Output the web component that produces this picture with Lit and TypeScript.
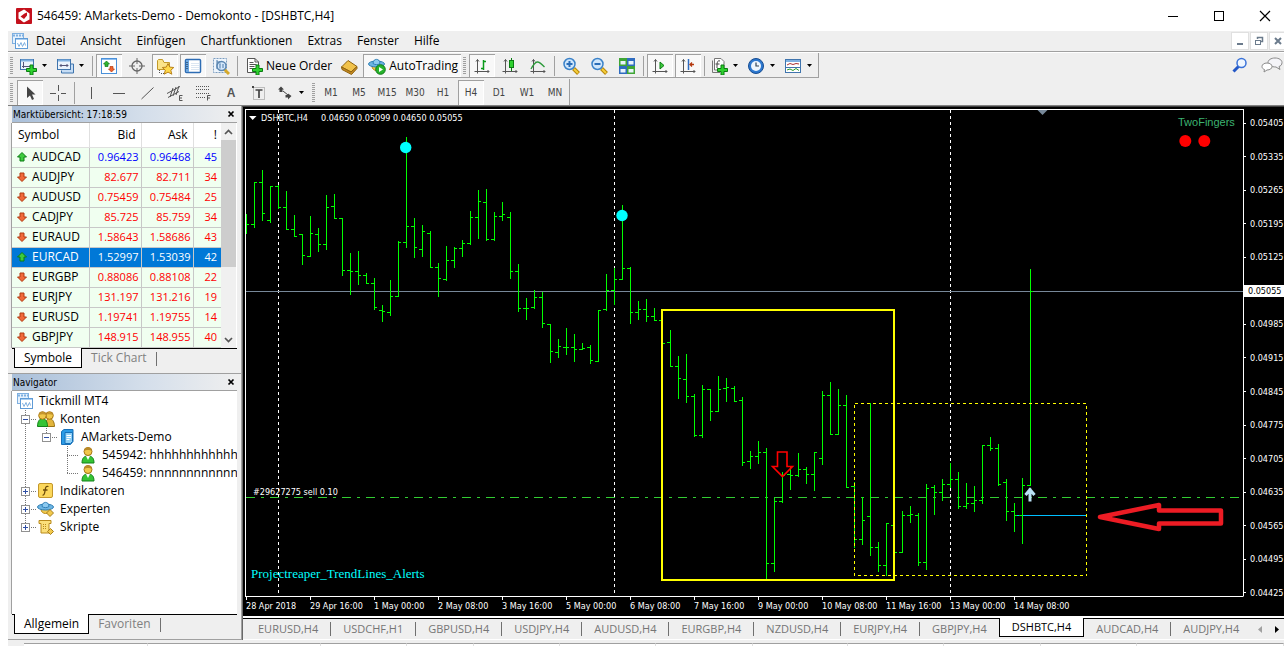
import { LitElement, html, svg, css, nothing } from "lit";
import { customElement, property, state } from "lit/decorators.js";
import { classMap } from "lit/directives/class-map.js";

/* ---------- icons, drawn on an 18 x 18 grid ---------- */
const axes = svg`<path d="M4.500 2.500V16.500M1.500 14.500H16M3 4.500L4.500 2.500L6 4.500M14.500 13L16 14.500L14.500 16" fill="none" stroke="#555"/>`;
const plus = svg`<path d="M11 8h3v3.500h3.500v3H14V18h-3v-3.500H7.500v-3H11z" fill="#2fd12f" stroke="#0a7d12"/>`;
const lens = (sign: unknown) => svg`<path d="M11.500 11.500L16.500 16.500" stroke="#b8860b" stroke-width="4"/><path d="M12 12L16 16" stroke="#f5cf3c" stroke-width="2"/><circle cx="7.500" cy="7" r="5.500" fill="#cfe6fb" stroke="#3b82c9" stroke-width="1.500"/>${sign}`;
const person = svg`<path d="M3 17c0-5 2-7 6-7s6 2 6 7z" fill="#35c435" stroke="#13821a"/><path d="M7 10l2 4 2-4z" fill="#fff"/><circle cx="9" cy="5.500" r="4" fill="#f0c84a" stroke="#a87512"/><path d="M5 5c0-5 8-5 8 0-2-1.500-6-1.500-8 0z" fill="#b98a2a"/>`;
const hat = svg`<path d="M4 9c0 6 9 6 9 0z" fill="#f2c94c" stroke="#b98a1b"/><ellipse cx="8.500" cy="7" rx="8" ry="3" fill="#6db5e3" stroke="#2f7fb5"/><path d="M5 6.500C5 1 12 1 12 6.500c-2 1.500-5 1.500-7 0z" fill="#8ccaf0" stroke="#2f7fb5"/>`;
const windows = svg`<rect x="1.500" y="1.500" width="11" height="10" fill="#e6f1fc" stroke="#7fb0e0"/><path d="M2 3.500H12" stroke="#7fb0e0" stroke-width="2" stroke-dasharray="2 1"/><rect x="4.500" y="6.500" width="12" height="10" fill="#fff" stroke="#5f9bd6"/><path d="M5 7.500H16" stroke="#a9cdf0"/><path d="M6.500 11l1.500 3.500 2-4 1.500 4 2-4 1 3" fill="none" stroke="#7fb0e0"/>`;

const ICONS: Record<string, unknown> = {
  logo: svg`<rect x="1" y="1" width="16" height="16" rx="1" fill="#c4111c"/><path d="M9 2.500L14.500 5.500v7L9 15.500 3.500 12.500v-7z" fill="#fff"/><path d="M9.500 6.500L12 5.500v3L9 12 5.500 9.500z" fill="#c4111c"/><path d="M11 3l4 3M3 12l4 3" stroke="#c4111c" stroke-width="1.500"/>`,
  windows,
  newchart: svg`<rect x="1.500" y="2.500" width="13" height="10" fill="#eaf3fd" stroke="#3f74ad"/><path d="M2 3.500H14" stroke="#7fb0e0" stroke-width="2"/><path d="M4.500 5v6M3 9.500h9" stroke="#557" fill="none"/>${plus}`,
  profiles: svg`<path d="M5.500 13.500v2.500h12V7H15" fill="#c6ddf5" stroke="#3f74ad"/><rect x="1.500" y="2.500" width="13" height="10" fill="#eaf3fd" stroke="#3f74ad"/><path d="M2 3.500H14" stroke="#7fb0e0" stroke-width="2"/><path d="M4 8.500h8M5.500 7L4 8.500 5.500 10M10.500 7L12 8.500 10.500 10" stroke="#557" fill="none"/>`,
  market: svg`<rect x="1.500" y="1.500" width="15" height="15" fill="#fff" stroke="#4a90d9"/><path d="M2 2.500H16" stroke="#8dbdf0"/><path d="M6.500 4L9.500 7H8v2.500H5V7H3.500z" fill="#2fb32f" stroke="#0e7a15" stroke-width=".7"/><path d="M11.500 15L8.500 12H10V9.500h3V12h1.500z" fill="#f06432" stroke="#b33a10" stroke-width=".7"/>`,
  datawin: svg`<circle cx="9" cy="9" r="5" fill="none" stroke="#666" stroke-width="1.300"/><path d="M9 1V7M9 11V17M1 9H7M11 9H17" stroke="#666"/>`,
  favorites: svg`<path d="M1.500 3.500V12.500H13.500V5.500H8L6.500 2.500H2.500z" fill="#fbe48a" stroke="#c29a2a"/><path d="M3.500 13v4M5 16.500h3" stroke="#555" stroke-dasharray="1 1"/><path d="M12 6.500l1.800 3.600 4 .4-3 2.700 1 4L12 15.100 8.300 17.200l1-4-3-2.700 4-.4z" fill="#ffd94a" stroke="#b9821a"/>`,
  terminal: svg`<rect x="1.500" y="2.500" width="15" height="13" rx="1" fill="#fff" stroke="#2e6db4" stroke-width="1.500"/><rect x="2" y="3" width="3" height="12" fill="#6da7e0"/><path d="M7 6.500h8M7 8.500h8M7 10.500h8M7 12.500h8" stroke="#dbe6f2"/><path d="M3 5v8" stroke="#123" stroke-dasharray="1 1"/>`,
  tester: svg`<rect x="1.500" y="1.500" width="13" height="14" fill="#eef5fc" stroke="#7b9dc0" stroke-dasharray="2 1"/><path d="M5 3v9M5 5h3M8 4v4" stroke="#4a78a8"/><path d="M12 12L17 17" stroke="#d6a92a" stroke-width="3"/><circle cx="9.500" cy="9" r="4.500" fill="#cfe6fb" fill-opacity=".8" stroke="#5c87b2" stroke-width="1.500"/><path d="M8 6.500v5M11 7v4" stroke="#4a78a8"/>`,
  order: svg`<path d="M2.500 1.500H10l3.500 3.500V15.500H2.500z" fill="#fff" stroke="#555"/><path d="M10 1.500V5H13.500M4.500 5.500h4M4.500 7.500h7M4.500 9.500h5M4.500 11.500h3" stroke="#555" fill="none"/>${plus}`,
  editor: svg`<path d="M1.500 10L8 3.500l9 6L11 15z" fill="#f1c24a" stroke="#8f6310"/><path d="M1.500 10l.5 2.500L11.500 17.500 17 11.500V9.500L11 15z" fill="#c58a22" stroke="#8f6310"/>`,
  auto: svg`${hat}<circle cx="12.500" cy="12.500" r="4.800" fill="#27b32c" stroke="#0f7a18"/><path d="M11 10v5l4-2.500z" fill="#fff"/>`,
  bars: svg`${axes}<path d="M10.500 3v10M10 4.500h3M8 11.500h3" stroke="#0a9a1a" stroke-width="1.500"/>`,
  candles: svg`${axes}<path d="M10.500 1v13" stroke="#0a7d12"/><rect x="8.500" y="3.500" width="4" height="7" fill="#2fd12f" stroke="#0a7d12"/>`,
  line: svg`${axes}<path d="M2 12C7 3 9 3 15.500 10" fill="none" stroke="#2c9a3a" stroke-width="1.300"/>`,
  zoomin: lens(svg`<path d="M4.500 7h6M7.500 4v6" stroke="#2a6db8" stroke-width="2"/>`),
  zoomout: lens(svg`<path d="M4.500 7h6" stroke="#2a6db8" stroke-width="2"/>`),
  tile: svg`<rect x="1" y="1" width="8" height="8" fill="#3fa535"/><rect x="9" y="1" width="8" height="8" fill="#2f6cc0"/><rect x="1" y="9" width="8" height="8" fill="#2f6cc0"/><rect x="9" y="9" width="8" height="8" fill="#3fa535"/><path d="M2.500 4h5v3.500h-5zM10.500 4h5v3.500h-5zM2.500 12h5v3.500h-5zM10.500 12h5v3.500h-5z" fill="#e9f3fb"/>`,
  scroll: svg`${axes}<path d="M9 5v7l4-3.500z" fill="#3ecb3e" stroke="#0a7d12"/>`,
  shift: svg`${axes}<path d="M9.500 2v11" stroke="#2f6cc0" stroke-width="1.500"/><path d="M15 7.500H11M13 5.500L11 7.500 13 9.500" stroke="#b5390f" stroke-width="1.300" fill="none"/>`,
  indicators: svg`<path d="M4.500 1.500H11L14 4.500V13H4.500z" fill="#fff" stroke="#777"/><path d="M2.500 3.500V15.500H10" stroke="#777" fill="none"/><path d="M10 4c-3-1-3 2-3 7M5.500 7h4" stroke="#444" fill="none"/>${plus}`,
  periods: svg`<circle cx="9" cy="9" r="7.500" fill="#2d78cf" stroke="#174d92"/><circle cx="9" cy="9" r="5" fill="#eef6fe"/><path d="M9 5.500V9H12" fill="none" stroke="#345" stroke-width="1.200"/>`,
  templates: svg`<rect x="1.500" y="2.500" width="15" height="13" fill="#fff" stroke="#3f74ad"/><path d="M2 4H16" stroke="#7fb0e0" stroke-width="2"/><path d="M2 10.500H16" stroke="#3f74ad"/><path d="M3 8l3-1.500 3 1 3-1 3 .5" fill="none" stroke="#a33"/><path d="M3 13l3-1 3 1.500 3-2 3 2" fill="none" stroke="#2a9a2a"/>`,
  cursor: svg`<path d="M6 2.500V14l3-2.500 2 4.500 2-1-2-4.500H14.500z" fill="#444"/>`,
  cross: svg`<path d="M9.500 1V7M9.500 11V17M1 9.500H7M12 9.500H17" stroke="#555"/>`,
  vline: svg`<path d="M9.500 3V15" stroke="#555"/>`,
  hline: svg`<path d="M3 9.500H15" stroke="#555"/>`,
  trend: svg`<path d="M3.500 15L15.500 3.500" stroke="#555"/>`,
  channel: svg`<path d="M1 9.500L14 2.500M2 13.500L13 7.500M4 13L7 4M7 12l3-9M10 11l3-9" stroke="#555" fill="none"/><path d="M16.500 11.500h-3v5h3M13.500 14h2.500" fill="none" stroke="#555"/>`,
  fibo: svg`<path d="M2 2.500H16M2 5.500H16M2 9.500H16M2 13.500H11" stroke="#555" stroke-dasharray="1 1"/><path d="M16.500 11.500h-3v5M13.500 14h2.500" fill="none" stroke="#555"/>`,
  label: svg`<rect x="3.500" y="3.500" width="11" height="12" fill="none" stroke="#888" stroke-dasharray="1 1"/><path d="M5.500 6h7M9 6v8" stroke="#444" stroke-width="1.700"/><rect x="2" y="2" width="2" height="2" fill="#444"/>`,
  arrows: svg`<path d="M5 2.500l3 3H6.500V8h-3V5.500H2z" fill="#444"/><path d="M7 7l5 4" stroke="#444"/><path d="M12 15.500l3.500-3.500L12 9.500v1.500H9.500v2.500H12z" fill="#444"/>`,
  search: svg`<path d="M2.500 15.500L8 10" stroke="#2357c6" stroke-width="3"/><circle cx="10.500" cy="7" r="4.500" fill="#eef6ff" stroke="#3a72d8" stroke-width="1.500"/>`,
  tree: windows,
  accounts: svg`<path d="M8 16.500c0-5 2-8 4.500-8s5 3 5 8z" fill="#e2b53c" stroke="#9a7416"/><circle cx="12.500" cy="5.500" r="3.800" fill="#f0c84a" stroke="#a87512"/><path d="M.500 16.500c0-5 2-8 5-8s5 3 5 8z" fill="#35c435" stroke="#13821a"/><circle cx="5.500" cy="5.500" r="3.800" fill="#f0c84a" stroke="#a87512"/><path d="M2 5c0-4.500 7-4.500 7 0-2-1-5-1-7 0zM9.500 4.500c1-3 6-3 6.500.5-2-1-4-1-6.500-.5z" fill="#c4952e"/>`,
  server: svg`<path d="M3.500 3.500L6 1.500h9v12l-2.500 3h-9z" fill="#2b9be6" stroke="#1670b8"/><path d="M7 4.500h7.500v9l-2 2H7z" fill="#8fd0f7" stroke="#1670b8"/><path d="M8.500 7.500h4.500M8.500 9.500h4.500M8.500 11.500h3" stroke="#fff"/>`,
  person,
  indicator: svg`<rect x="1.500" y="1.500" width="14" height="14" rx="1.500" fill="#fbd75b" stroke="#c4972a"/><path d="M11.500 4.500C8.500 3.500 8.500 6 8 9s-1 4.500-2.500 4M6 8h4.500" fill="none" stroke="#6d4c0b" stroke-width="1.300"/>`,
  expert: svg`${hat}<path d="M13 9.500l3.500 3.500-3.500 3.500L9.500 13z" fill="#f2c94c" stroke="#a8801f"/>`,
  script: svg`<path d="M2 2.500h12v3h-2V12h2.500v3H4V5.500H2z" fill="#fbdf7a" stroke="#b98a1b"/><path d="M6 6.500h4M6 8.500h4M6 10.500h4" stroke="#b98a1b" stroke-dasharray="1 1"/><path d="M13.500 10.500l3 3-3 3-3-3z" fill="#f2c94c" stroke="#a8801f"/>`,
  up: svg`<path d="M9 4.500l4.500 4.500H11v4H7V9H4.500z" fill="#3ecb3e" stroke="#0a7d12"/>`,
  down: svg`<path d="M9 13.500l4.500-4.500H11V5H7v4H4.500z" fill="#f06a3a" stroke="#b23a10"/>`,
};
const icon = (name: string) => html`<svg width="18" height="18" viewBox="0 0 18 18" aria-hidden="true">${ICONS[name]}</svg>`;
const caret = html`<svg width="7" height="4" viewBox="0 0 7 4" aria-hidden="true"><path d="M1 0H6L3.500 3z" fill="#000"/></svg>`;
const cross = html`<svg width="8" height="8" viewBox="0 0 8 8" aria-hidden="true"><path d="M1.500 1.500L6.500 6.500M6.500 1.500L1.500 6.500" stroke="#000" stroke-width="1.700"/></svg>`;

/* ---------- chart data: high, low, open, close on the vertical scale ---------- */
const BARS: number[][] = [
  [214,234,224,224],[182,228,224,182],[170,221,182,213],[186,223,220,186],[185,209,186,207],[191,230,207,229],
  [215,237,229,236],[234,265,234,255],[216,257,256,233],[228,252,234,244],[195,250,244,207],[194,219,206,218],
  [218,276,218,270],[253,295,270,271],[251,285,271,275],[273,284,275,283],[278,310,283,307],[305,322,310,311],
  [280,316,312,296],[241,297,296,242],[137,248,242,226],[218,258,226,247],[225,257,249,231],[231,268,233,267],
  [263,297,267,278],[246,281,279,260],[247,268,260,248],[240,257,248,243],[211,245,243,217],[190,239,217,201],
  [189,241,202,239],[212,241,239,216],[202,221,216,214],[212,279,217,271],[264,312,271,308],[298,320,308,308],
  [290,309,307,297],[292,328,297,323],[324,363,324,351],[339,358,352,346],[328,355,347,347],[334,362,347,349],
  [343,350,349,348],[345,364,347,360],[310,362,361,310],[274,311,309,290],[268,305,290,279],[205,280,279,268],
  [267,324,268,312],[301,320,312,309],[299,322,309,316],[308,321,316,320],[320,344,320,343],[330,367,342,366],
  [356,399,366,378],[354,403,379,396],[394,437,396,435],[385,438,435,389],[389,421,389,411],[376,412,411,389],
  [378,402,388,387],[386,402,388,401],[397,466,400,462],[451,469,461,456],[441,464,456,452],[448,579,452,563],
  [498,572,563,501],[472,503,501,475],[466,490,474,475],[453,477,475,469],[467,484,469,474],[452,491,474,452],
  [391,465,458,395],[382,435,395,434],[389,435,434,405],[395,488,405,487],[482,548,486,539],[497,545,539,520],
  [403,556,516,547],[542,572,547,565],[523,576,565,523],[525,553,525,552],[511,553,552,515],[506,523,515,514],
  [513,566,515,562],[484,570,562,488],[485,515,487,492],[479,501,492,484],[463,488,484,479],[472,509,479,506],
  [483,509,506,503],[486,512,503,500],[445,504,500,445],[437,451,445,448],[444,486,448,484],[479,521,482,511],
  [503,532,511,515],[478,544,515,485],[269,486,485,291],
];
const barPath = BARS.map(([h, l, o, c], i) => {
  const x = 246 + i * 8;
  return `M${x + 0.5} ${h}V${l}M${x - 3} ${o + 0.5}H${x + 1}M${x} ${c + 0.5}H${x + 3}`;
}).join("");

const PRICES = ["0.05405","0.05335","0.05265","0.05195","0.05125","0.05055","0.04985","0.04915","0.04845","0.04775","0.04705","0.04635","0.04565","0.04495","0.04425"];
const TIMES = ["28 Apr 2018","29 Apr 16:00","1 May 00:00","2 May 08:00","3 May 16:00","5 May 00:00","6 May 08:00","7 May 16:00","9 May 00:00","10 May 08:00","11 May 16:00","13 May 00:00","14 May 08:00"];

@customElement("mt-chart")
export class MtChart extends LitElement {
  static styles = css`
    :host { flex: 1; min-height: 0; display: grid; grid-template-columns: minmax(0, 1fr) 41px; grid-template-rows: minmax(0, 1fr) 19px; background: #000; color: #fff; padding: 2px 0 0 2px; font: 9px/12px "DejaVu Sans Condensed", "DejaVu Sans", sans-serif; overflow: hidden; }
    .plot { display: block; width: 100%; height: 100%; box-sizing: border-box; border: 1px solid #fff; border-right: 0; }
    .prices { margin: 0; padding: 8px 0 0; list-style: none; border-left: 1px solid #fff; border-bottom: 1px solid #000; display: flex; flex-direction: column; justify-content: space-between; }
    .prices li { display: flex; align-items: center; gap: 4px; height: 12px; white-space: nowrap; }
    .prices li:last-child { margin-bottom: -3px; }
    .prices li::before { content: ""; width: 2px; height: 1px; background: #fff; }
    .prices .now { gap: 0; }
    .now span { background: #fff; color: #000; padding: 0 4px; }
    .times { margin: 0; padding: 0 0 0 1px; list-style: none; display: flex; overflow: hidden; }
    .times li { flex: 0 0 64px; white-space: nowrap; line-height: 12px; }
    .times li::before { content: ""; display: block; width: 1px; height: 3px; background: #fff; }
    .small { font-size: 9px; fill: #fff; }
    .brand { font: 11px "Liberation Sans", sans-serif; fill: #3cb371; }
    .alerts { font: 13px "Liberation Serif", serif; fill: #00ffff; }
  `;
  render() {
    return html`
      <svg class="plot" role="img" aria-label="DSHBTC,H4">
        <g transform="translate(-246 -110)">
          <g fill="none" shape-rendering="crispEdges">
            <path d="M278.500 110V596M614.500 110V596M950.500 110V596" stroke="#fff" stroke-dasharray="3 3"/>
            <path d="M246 291.500H1243" stroke="#778899"/>
            <path d="M246 497.500H1243" stroke="#32cd32" stroke-dasharray="9 6 3 6"/>
            <path d="M1014 515.500H1087" stroke="#00bfff"/>
            <path d=${barPath} stroke="#00ff00"/>
            <rect x="854.500" y="403.500" width="232" height="172" stroke="#ffff00" stroke-dasharray="3 3"/>
            <rect x="662" y="310" width="232" height="270" stroke="#ffff00" stroke-width="2"/>
          </g>
          <circle cx="405.700" cy="147.500" r="5.700" fill="#00ffff"/>
          <circle cx="622" cy="215.500" r="5.700" fill="#00ffff"/>
          <circle cx="1185.300" cy="141" r="6" fill="#f00"/>
          <circle cx="1204.300" cy="141" r="6" fill="#f00"/>
          <path d="M777.500 452H787V466.500H792.500L782.500 476.500 772.500 466.500H777.500z" fill="none" stroke="#f00" stroke-width="1.600"/>
          <path d="M1030 488.500V501.500M1025.500 495L1030 489.500 1034.500 495" fill="none" stroke="#b9e0f5" stroke-width="3"/>
          <path d="M1100 517L1159 505V510.500H1221V523.500H1159V529z" fill="none" stroke="#ed1c24" stroke-width="4.500" stroke-linejoin="round"/>
          <path d="M1037.500 110H1047.500L1042.500 115z" fill="#778899"/>
          <path d="M249 116H256.500L252.700 120z" fill="#fff"/>
          <text class="small" x="261" y="121">DSHBTC,H4</text>
          <text class="small" x="321" y="121">0.04650 0.05099 0.04650 0.05055</text>
          <text class="small" x="253" y="495">#29627275 sell 0.10</text>
          <text class="brand" x="1178" y="126">TwoFingers</text>
          <text class="alerts" x="251" y="578">Projectreaper_TrendLines_Alerts</text>
        </g>
      </svg>
      <ol class="prices">${PRICES.map((p) => html`<li class=${classMap({ now: p === "0.05055" })}><span>${p}</span></li>`)}</ol>
      <ol class="times">${TIMES.map((t) => html`<li>${t}</li>`)}</ol>
    `;
  }
}

const QUOTES: [string, string, string, string, boolean][] = [
  ["AUDCAD","0.96423","0.96468","45",true],["AUDJPY","82.677","82.711","34",false],["AUDUSD","0.75459","0.75484","25",false],
  ["CADJPY","85.725","85.759","34",false],["EURAUD","1.58643","1.58686","43",false],["EURCAD","1.52997","1.53039","42",true],
  ["EURGBP","0.88086","0.88108","22",false],["EURJPY","131.197","131.216","19",false],["EURUSD","1.19741","1.19755","14",false],
  ["GBPJPY","148.915","148.955","40",false],
];
/* guides per row: v line through, t branch, l last branch, + and - boxes, p last + box, x empty */
const NODES: [string, string, string][] = [
  ["","tree","Tickmill MT4"],["o","accounts","Konten"],["v-","server","AMarkets-Demo"],
  ["vxt","person","545942: hhhhhhhhhhhh"],["vxl","person","546459: nnnnnnnnnnnnnnnn"],
  ["+","indicator","Indikatoren"],["+","expert","Experten"],["p","script","Skripte"],
];
const guide = (g: string) => {
  const open = g === "-" || g === "o";
  const box = open || g === "+" || g === "p";
  const line = g === "x" ? "" : g === "l" || g === "p" || g === "-" ? "M9.500 0V9" : "M9.500 0V18";
  return html`<svg width="21" height="18" viewBox="0 0 21 18" aria-hidden="true">
    <path d="${line}${g === "x" || g === "v" ? "" : "M9 9.500H20"}" fill="none" stroke="#777" stroke-dasharray="1 1"/>
    ${box ? svg`<rect x="5.500" y="5.500" width="8" height="8" fill="#fff" stroke="#919191"/><path d="M7 9.500H12${open ? "" : "M9.500 7V12"}" stroke="#2f4fa5"/>` : nothing}
  </svg>`;
};

@customElement("mt-panel")
export class MtPanel extends LitElement {
  @property() heading = "";
  @property({ attribute: false }) tabs: string[] = [];
  static styles = css`
    :host { display: flex; flex-direction: column; min-height: 0; padding: 0 4px 3px; border-bottom: 1px solid #a0a0a0; }
    .title { display: flex; align-items: center; justify-content: space-between; height: 16px; flex: none; padding: 0 2px 0 1px; background: linear-gradient(90deg, #a9bfd9, #d5dfeb 60%, #efefef); border-bottom: 1px solid #a0a0a0; }
    h2 { margin: 0; font: 10px/15px "DejaVu Sans Condensed", "DejaVu Sans", sans-serif; }
    button { font: inherit; border: 0; background: none; padding: 0; color: #808080; display: flex; align-items: center; }
    .body { flex: 1; min-height: 0; display: flex; overflow: hidden; background: #fff; border-left: 1px solid #a0a0a0; margin-left: -1px; }
    .tabs { display: flex; height: 22px; flex: none; box-shadow: inset 0 1px #000; }
    .tabs button { height: 20px; padding: 0 9px; }
    .tabs button.on { background: #fff; color: #000; margin-left: 2px; border: 1px solid #000; border-top: 0; }
    .rule { width: 1px; height: 14px; margin-top: 4px; background: #707070; }
  `;
  render() {
    return html`
      <div class="title"><h2>${this.heading}</h2><button aria-label="Schließen">${cross}</button></div>
      <div class="body"><slot></slot></div>
      <div class="tabs">${this.tabs.map((t, i) => html`<button class=${classMap({ on: i === 0 })}>${t}</button>`)}<span class="rule"></span></div>
    `;
  }
}

const CHART_TABS = ["EURUSD,H4","USDCHF,H1","GBPUSD,H4","USDJPY,H4","AUDUSD,H4","EURGBP,H4","NZDUSD,H4","EURJPY,H4","GBPJPY,H4","DSHBTC,H4","AUDCAD,H4","AUDJPY,H4"];
const STATUS = [124, 173, 86, 67, 86, 96, 97, 95, 96, 97, 96];

@customElement("app-root")
export class AppRoot extends LitElement {
  @state() private active = "DSHBTC,H4";
  static styles = css`
    :host { display: flex; flex-direction: column; height: 100vh; padding-left: 8px; box-sizing: border-box; background: #fff; color: #000; font: 12px/16px "Open Sans", "Noto Sans", sans-serif; overflow: hidden; }
    button { font: inherit; color: inherit; border: 0; background: none; padding: 0; margin: 0; display: flex; align-items: center; justify-content: center; flex: none; }
    svg { flex: none; display: block; }
    .caption { display: flex; align-items: center; height: 31px; flex: none; padding-left: 7px; margin-right: -4px; }
    h1 { flex: 1; margin: 0; padding-left: 4px; font: inherit; white-space: nowrap; }
    .caption button { width: 46px; height: 31px; }
    .menu { display: flex; align-items: center; height: 20px; flex: none; background: #efefef; border-bottom: 1px solid #a0a0a0; padding-left: 3px; }
    .menu nav { display: flex; flex: 1; gap: 15px; padding-left: 7px; }
    .menu a { color: inherit; text-decoration: none; }
    .mdi { display: flex; gap: 1px; overflow: hidden; width: 53px; }
    .mdi button { width: 18px; height: 18px; box-sizing: border-box; background: #fff; border: 1px solid #e0e0e0; }
    .bars { background: #efefef; border-top: 1px solid #fff; display: flex; justify-content: space-between; flex: none; border-bottom: 1px solid #808080; }
    .row { display: flex; height: 25px; box-sizing: border-box; width: max-content; border-right: 1px solid #a0a0a0; border-bottom: 1px solid #a0a0a0; margin-bottom: 1px; padding-top: 1px; }
    .row.last { border-bottom: 0; height: 26px; margin: 0; }
    .grip { width: 3px; margin: 3px 2px; background: repeating-linear-gradient(#a0a0a0 0 1px, transparent 1px 2px); }
    .grip.first { margin-right: 3px; }
    .tool { width: 28px; }
    .on { box-shadow: inset 1px 1px #a0a0a0, inset -1px -1px #fff; background: #f8f8f8; }
    .tool.on { width: 26px; margin: 0 1px; }
    .drop { width: 37px; gap: 4px; justify-content: flex-start; padding-left: 3px; box-sizing: border-box; }
    .sep { width: 1px; background: #a0a0a0; margin: 2px 2px 1px; }
    .wide { gap: 3px; padding: 0 3px 0 5px; }
    .frame { font: 10px/14px "DejaVu Sans Condensed", "DejaVu Sans", sans-serif; color: #444; }
    .letter { font: bold 12px "Liberation Sans", sans-serif; color: #555; }
    .extra { display: flex; gap: 12px; align-items: flex-start; padding: 3px 1px 0 0; }
    .main { flex: 1; min-height: 0; display: grid; grid-template-columns: 234px minmax(0, 1fr); background: #efefef; }
    .side { display: grid; grid-template-columns: minmax(0, 1fr); grid-template-rows: 268px minmax(0, 1fr); min-height: 0; border-right: 1px solid #a0a0a0; box-sizing: border-box; }
    .work { display: flex; flex-direction: column; min-height: 0; min-width: 0; border-left: 1px solid #696969; border-top: 1px solid #404040; }
    table { table-layout: fixed; border-collapse: collapse; width: 209px; flex: none; font-size: 11px; }
    col.sym { width: 77px; } col.num { width: 52px; } col.spread { width: 28px; }
    th, td { box-sizing: border-box; padding: 0 2px; text-align: right; font-weight: 400; border: solid #c8c8c8; border-width: 0 1px 1px 0; white-space: nowrap; }
    th { height: 24px; border-color: #e0e0e0; padding-right: 5px; font-size: 12px; }
    td { height: 20px; line-height: 18px; background: #f0fff0; color: #f00; }
    th:last-child, td:last-child { padding-right: 4px; border-right: 0; }
    th.name { text-align: left; padding-left: 6px; }
    td.name { color: #000; font-size: 12px; padding: 0 0 0 1px; }
    .name div { display: flex; align-items: center; gap: 1px; }
    .up td { color: #00f; } .up td.name { color: #000; }
    .sel td, .sel td.name { background: #0078d7; color: #fff; }
    .scroll { flex: 0 0 15px; display: flex; flex-direction: column; align-items: center; background: #f0f0f0; }
    .scroll button { height: 17px; width: 100%; }
    .thumb { width: 15px; height: 127px; background: #cdcdcd; }
    .scroll .down { margin-top: auto; }
    .tree { list-style: none; margin: 0; padding: 1px 0 0 4px; }
    .tree li { display: flex; height: 18px; align-items: center; white-space: nowrap; }
    .tree span { padding-left: 5px; line-height: 18px; }
    .tabs { display: flex; height: 23px; flex: none; padding: 0 5px 0 3px; background: linear-gradient(#fff 0 2px, #000 2px 3px, transparent 3px); color: #757575; border-bottom: 1px solid #fff; align-items: center; }
    .tabs button.tab { flex: 0 1 auto; height: 14px; padding: 0 12px; border-right: 1px solid #707070; white-space: nowrap; font-size: 11px; margin-top: 3px; }
    .tabs button.picked { background: #fff; color: #000; border: solid #000; border-width: 0 1px 1px; align-self: flex-start; height: 19px; margin: 2px 0 0 -1px; }
    .tabs button.tab:nth-last-child(2) { border-right: 0; padding-right: 0; }
    .arrows { display: flex; flex: 1; justify-content: flex-end; gap: 13px; margin-top: 3px; }
    .status { display: flex; height: 6px; flex: none; background: #efefef; padding: 3px 0 0 16px; box-sizing: border-box; }
    .cell { background: #fff; border-top: 1px solid #a0a0a0; border-right: 1px solid #e0e0e0; box-sizing: border-box; }
    .cell:last-child { flex: 1; }
  `;
  private tool(name: string, label: string, on = false) {
    return html`<button class=${classMap({ tool: true, on })} aria-label=${label}>${icon(name)}</button>`;
  }
  private drop(name: string, label: string) {
    return html`<button class="drop" aria-label=${label}>${icon(name)}${caret}</button>`;
  }
  render() {
    const sep = html`<span class="sep"></span>`;
    const grip = html`<span class="grip"></span>`;
    return html`
      <header class="caption">
        ${icon("logo")}<h1>546459: AMarkets-Demo - Demokonto - [DSHBTC,H4]</h1>
        <button aria-label="Minimieren"><svg width="12" height="12"><path d="M1 6.500H11" stroke="#000"/></svg></button>
        <button aria-label="Maximieren"><svg width="12" height="12"><rect x="1.500" y="1.500" width="9" height="9" fill="none" stroke="#000"/></svg></button>
        <button aria-label="Beenden"><svg width="12" height="12"><path d="M1 1L11 11M11 1L1 11" stroke="#000" stroke-width="1.200"/></svg></button>
      </header>
      <div class="menu">${icon("windows")}
        <nav>${["Datei","Ansicht","Einfügen","Chartfunktionen","Extras","Fenster","Hilfe"].map((m) => html`<a href="#">${m}</a>`)}</nav>
        <div class="mdi">
          <button aria-label="Chart minimieren"><svg width="10" height="10"><path d="M2 8H8" stroke="#6b7b8c" stroke-width="2"/></svg></button>
          <button aria-label="Chart wiederherstellen"><svg width="10" height="10"><path d="M3.500 3V1.500H8.500V5.500H7" fill="none" stroke="#6b7b8c" stroke-width="1.500"/><rect x="1.500" y="4.500" width="5" height="4" fill="none" stroke="#6b7b8c"/></svg></button>
          <button aria-label="Chart schließen"><svg width="10" height="10"><path d="M2 2L8 8M8 2L2 8" stroke="#6b7b8c" stroke-width="2"/></svg></button>
        </div>
      </div>
      <div class="bars">
        <div>
          <div class="row">
            <span class="grip first"></span>${this.drop("newchart", "Neuer Chart")}${this.drop("profiles", "Profile")}${sep}
            ${this.tool("market", "Marktübersicht", true)}${this.tool("datawin", "Datenfenster")}${this.tool("favorites", "Navigator", true)}${this.tool("terminal", "Terminal", true)}${this.tool("tester", "Strategietester")}${sep}
            <button class="wide">${icon("order")}Neue Order</button>${this.tool("editor", "MetaEditor")}
            <button class="wide on">${icon("auto")}AutoTrading</button>${grip}
            ${this.tool("bars", "Balkenchart", true)}${this.tool("candles", "Kerzenchart")}${this.tool("line", "Linienchart")}${sep}
            ${this.tool("zoomin", "Vergrößern")}${this.tool("zoomout", "Verkleinern")}${this.tool("tile", "Fenster anordnen")}${sep}
            ${this.tool("scroll", "Automatischer Bildlauf", true)}${this.tool("shift", "Chart verschieben", true)}${sep}
            ${this.drop("indicators", "Indikatoren")}${this.drop("periods", "Perioden")}${this.drop("templates", "Vorlagen")}
          </div>
          <div class="row last">
            <span class="grip first"></span>${this.tool("cursor", "Cursor", true)}${this.tool("cross", "Fadenkreuz")}${sep}
            ${this.tool("vline", "Vertikale Linie")}${this.tool("hline", "Horizontale Linie")}${this.tool("trend", "Trendlinie")}${this.tool("channel", "Kanal")}${this.tool("fibo", "Fibonacci")}
            <button class="tool letter">A</button>${this.tool("label", "Textlabel")}${this.drop("arrows", "Pfeile")}${grip}
            ${["M1","M5","M15","M30","H1","H4","D1","W1","MN"].map((f) => html`<button class=${classMap({ tool: true, frame: true, on: f === "H4" })}>${f}</button>`)}
          </div>
        </div>
        <div class="extra">
          ${icon("search")}
          <svg width="22" height="18" viewBox="0 0 22 18"><path d="M14 2c4 0 7 2 7 4.500S19.500 10 18 10.500l1 3-4-2.500C10 11 7 9 7 6.500S10 2 14 2z" fill="#f4f4f8" stroke="#8a8a8a"/><path d="M6 7c3 0 5 1.500 5 3.500S9 14 6 14l-3 2 .5-2.500C2 13 1 12 1 10.500 1 8.500 3 7 6 7z" fill="#fff" stroke="#8a8a8a"/></svg>
        </div>
      </div>
      <main class="main">
        <aside class="side">
          <mt-panel heading="Marktübersicht: 17:18:59" .tabs=${["Symbole", "Tick Chart"]}>
            <table>
              <colgroup><col class="sym" /><col class="num" /><col class="num" /><col class="spread" /></colgroup>
              <thead><tr><th class="name">Symbol</th><th>Bid</th><th>Ask</th><th>!</th></tr></thead>
              <tbody>${QUOTES.map(([s, b, a, d, up]) => html`<tr class=${classMap({ up, sel: s === "EURCAD" })}>
                <td class="name"><div>${icon(up ? "up" : "down")}${s}</div></td><td>${b}</td><td>${a}</td><td>${d}</td></tr>`)}</tbody>
            </table>
            <div class="scroll">
              <button aria-label="Nach oben"><svg width="9" height="6"><path d="M1 5L4.500 1.500 8 5" fill="none" stroke="#555" stroke-width="1.700"/></svg></button>
              <div class="thumb"></div>
              <button class="down" aria-label="Nach unten"><svg width="9" height="6"><path d="M1 1L4.500 4.500 8 1" fill="none" stroke="#555" stroke-width="1.700"/></svg></button>
            </div>
          </mt-panel>
          <mt-panel heading="Navigator" .tabs=${["Allgemein", "Favoriten"]}>
            <ul class="tree">${NODES.map(([g, ic, text]) => html`<li>${[...g].map(guide)}${icon(ic)}<span>${text}</span></li>`)}</ul>
          </mt-panel>
        </aside>
        <section class="work">
          <mt-chart></mt-chart>
          <div class="tabs">
            ${CHART_TABS.map((t) => html`<button class=${classMap({ tab: true, picked: t === this.active })} @click=${() => (this.active = t)}>${t}</button>`)}
            <div class="arrows">
              <button aria-label="Zurück"><svg width="4" height="7"><path d="M4 0V7L0 3.500z" fill="#a0a0a0"/></svg></button>
              <button aria-label="Weiter"><svg width="4" height="7"><path d="M0 0V7L4 3.500z" fill="#000"/></svg></button>
            </div>
          </div>
        </section>
      </main>
      <footer class="status">${STATUS.map((w) => html`<span class="cell" style="width:${w}px"></span>`)}<span class="cell"></span></footer>
    `;
  }
}
